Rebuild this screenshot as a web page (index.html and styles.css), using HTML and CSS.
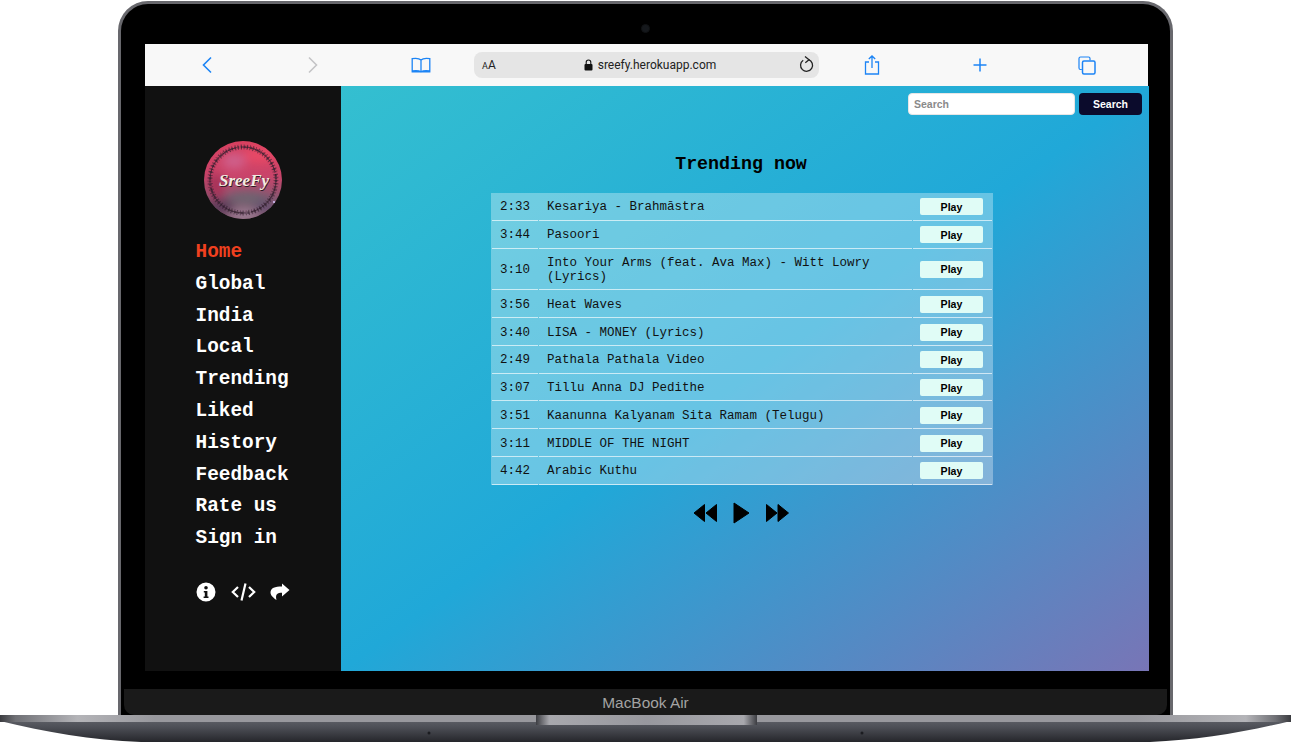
FILE: index.html
```html
<!DOCTYPE html>
<html lang="en">
<head>
<meta charset="utf-8">
<title>SreeFy</title>
<link rel="stylesheet" href="styles.css">
</head>
<body>
<div class="laptop">
  <div class="lid">
    <div class="camera-row"><span class="camera"></span></div>
    <div class="screen">
      <div class="safari">
        <svg class="s-icon back" width="12" height="18" viewBox="0 0 12 18"><path d="M10 1.500 2.500 9 10 16.500" fill="none" stroke="#1c84f5" stroke-width="1.600"/></svg>
        <svg class="s-icon fwd" width="12" height="18" viewBox="0 0 12 18"><path d="M2 1.500 9.500 9 2 16.500" fill="none" stroke="#c4c4c6" stroke-width="1.600"/></svg>
        <svg class="s-icon book" width="20" height="16" viewBox="0 0 20 16"><path d="M10 3C8.500 1.500 5 1 1.200 1.600V14C5 13.500 8.500 13.800 10 15 11.500 13.800 15 13.500 18.800 14V1.600C15 1 11.500 1.500 10 3ZM10 3V15M.6 14.800H19.400" fill="none" stroke="#1c84f5" stroke-width="1.300"/></svg>
        <div class="url">
          <span class="aa"><small>A</small>A</span>
          <span class="address">
            <svg width="9" height="12" viewBox="0 0 9 12"><rect x=".5" y="5" width="8" height="6.500" rx="1" fill="#111"/><path d="M2.200 5.500V3.300a2.300 2.300 0 0 1 4.600 0v2.200" fill="none" stroke="#111" stroke-width="1.100"/></svg>
            sreefy.herokuapp.com
          </span>
          <svg class="reload" width="15" height="18" viewBox="0 0 15 18"><path d="M9.500 3.600A6 6 0 1 1 4.200 4.300" fill="none" stroke="#222" stroke-width="1.300"/><path d="M6 .5 10 3.700 6.300 6.800" fill="none" stroke="#222" stroke-width="1.300"/></svg>
        </div>
        <svg class="s-icon share" width="16" height="20" viewBox="0 0 16 20"><path d="M5 7H1.500v12h13V7H11M8 13V1M4.800 4 8 1l3.200 3" fill="none" stroke="#1c84f5" stroke-width="1.300"/></svg>
        <svg class="s-icon plus" width="16" height="16" viewBox="0 0 16 16"><path d="M8 1.500v13M1.500 8h13" fill="none" stroke="#1c84f5" stroke-width="1.500"/></svg>
        <svg class="s-icon tabs" width="18" height="19" viewBox="0 0 18 19"><path d="M3.800 13.500H2.500a1.500 1.500 0 0 1-1.500-1.500V2.500A1.500 1.500 0 0 1 2.500 1h8A1.500 1.500 0 0 1 12 2.500v1.800" fill="none" stroke="#1c84f5" stroke-width="1.200"/><rect x="4.500" y="5" width="12.500" height="13" rx="1.500" fill="none" stroke="#1c84f5" stroke-width="1.500"/></svg>
      </div>
      <div class="app">
        <aside class="sidebar">
          <svg class="logo" width="78" height="78" viewBox="0 0 78 78">
            <defs>
              <linearGradient id="lg1" x1="0" y1="0" x2="0" y2="1">
                <stop offset="0" stop-color="#d8405f"/>
                <stop offset=".45" stop-color="#c9446a"/>
                <stop offset=".72" stop-color="#8d5570"/>
                <stop offset="1" stop-color="#8b5f78"/>
              </linearGradient>
              <filter id="blur" x="-30%" y="-30%" width="160%" height="160%"><feGaussianBlur stdDeviation="5"/></filter>
              <filter id="soft" x="-10%" y="-10%" width="120%" height="120%"><feGaussianBlur stdDeviation=".3"/></filter>
              <clipPath id="disc"><circle cx="39" cy="39" r="39"/></clipPath>
            </defs>
            <g clip-path="url(#disc)">
              <rect width="78" height="78" fill="url(#lg1)"/>
              <g filter="url(#blur)">
                <ellipse cx="56" cy="14" rx="16" ry="8" fill="#e84a66"/>
                <ellipse cx="30" cy="20" rx="12" ry="8" fill="#cf5f8a"/>
                <ellipse cx="12" cy="45" rx="8" ry="13" fill="#a83358"/>
                <ellipse cx="44" cy="58" rx="20" ry="7" fill="#6e6470"/>
                <ellipse cx="16" cy="66" rx="14" ry="8" fill="#5b3a58"/>
                <ellipse cx="62" cy="66" rx="12" ry="7" fill="#66506e"/>
                <ellipse cx="40" cy="74" rx="14" ry="5" fill="#9b8296"/>
              </g>
            </g>
            <g filter="url(#soft)" fill="none" stroke="#33202e">
              <circle cx="39" cy="39" r="33" stroke-width="5" stroke-opacity=".6" stroke-dasharray=".8 2.200 1.200 1.800"/>
              <circle cx="39" cy="39" r="33" stroke-width="2.500" stroke-opacity=".6" stroke-dasharray="2 1.500 1 2"/>
              <circle cx="39" cy="39" r="33" stroke-width=".8" stroke-dasharray="44 6 46 5 48 4 45 3"/>
            </g>
            <circle cx="70" cy="61" r="1" fill="#d9c8ff"/>
            <text class="logo-shadow" x="40.700" y="45.700" text-anchor="middle">SreeFy</text>
            <text class="logo-text" x="40" y="45" text-anchor="middle">SreeFy</text>
          </svg>
          <nav class="nav">
            <a class="active">Home</a>
            <a>Global</a>
            <a>India</a>
            <a>Local</a>
            <a>Trending</a>
            <a>Liked</a>
            <a>History</a>
            <a>Feedback</a>
            <a>Rate us</a>
            <a>Sign in</a>
          </nav>
          <div class="tools">
            <svg width="20" height="20" viewBox="0 0 20 20"><path fill-rule="evenodd" d="M10 .5a9.500 9.500 0 1 0 0 19 9.500 9.500 0 0 0 0-19ZM10 4a1.800 1.800 0 1 1 0 3.600A1.800 1.800 0 0 1 10 4ZM7.800 9h3.600v5.500h1.100V16H7.600v-1.500h1.200v-4h-1Z" fill="#fff"/></svg>
            <svg width="25" height="20" viewBox="0 0 25 20"><path d="M7 5 1.800 10 7 15M18 5l5.200 5L18 15M14.500 1.500 10.500 18.500" fill="none" stroke="#fff" stroke-width="2.200"/></svg>
            <svg width="20" height="18" viewBox="0 0 20 18"><path d="M12 .5 19.500 7 12 13.500V9.700C7.500 9.700 5 11 6.500 17 2 14 .5 11.500.5 9.500.5 5 5 3.500 12 3.500Z" fill="#fff"/></svg>
          </div>
        </aside>
        <main class="main">
          <form class="search">
            <input class="search-input" type="text" placeholder="Search">
            <button class="search-btn" type="button">Search</button>
          </form>
          <section class="content">
            <h1 class="title">Trending now</h1>
            <table class="songs">
              <tbody>
                <tr><td class="time">2:33</td><td class="name">Kesariya - Brahmāstra</td><td class="act"><button class="play" type="button">Play</button></td></tr>
                <tr><td class="time">3:44</td><td class="name">Pasoori</td><td class="act"><button class="play" type="button">Play</button></td></tr>
                <tr><td class="time">3:10</td><td class="name">Into Your Arms (feat. Ava Max) - Witt Lowry (Lyrics)</td><td class="act"><button class="play" type="button">Play</button></td></tr>
                <tr><td class="time">3:56</td><td class="name">Heat Waves</td><td class="act"><button class="play" type="button">Play</button></td></tr>
                <tr><td class="time">3:40</td><td class="name">LISA - MONEY (Lyrics)</td><td class="act"><button class="play" type="button">Play</button></td></tr>
                <tr><td class="time">2:49</td><td class="name">Pathala Pathala Video</td><td class="act"><button class="play" type="button">Play</button></td></tr>
                <tr><td class="time">3:07</td><td class="name">Tillu Anna DJ Pedithe</td><td class="act"><button class="play" type="button">Play</button></td></tr>
                <tr><td class="time">3:51</td><td class="name">Kaanunna Kalyanam Sita Ramam (Telugu)</td><td class="act"><button class="play" type="button">Play</button></td></tr>
                <tr><td class="time">3:11</td><td class="name">MIDDLE OF THE NIGHT</td><td class="act"><button class="play" type="button">Play</button></td></tr>
                <tr><td class="time">4:42</td><td class="name">Arabic Kuthu</td><td class="act"><button class="play" type="button">Play</button></td></tr>
              </tbody>
            </table>
            <div class="player">
              <svg width="24" height="20" viewBox="0 0 24 20"><path d="M11.500 1.500v17L1 10ZM23.500 1.500v17L13 10Z" fill="#000" stroke="#000" stroke-linejoin="round"/></svg>
              <svg width="17" height="22" viewBox="0 0 17 22"><path d="M1 1v20l15-10Z" fill="#000" stroke="#000" stroke-linejoin="round"/></svg>
              <svg width="24" height="20" viewBox="0 0 24 20"><path d="M.5 1.500v17L11 10ZM12 1.500v17L22.500 10Z" fill="#000" stroke="#000" stroke-linejoin="round"/></svg>
            </div>
          </section>
        </main>
      </div>
    </div>
    <div class="chin">MacBook Air</div>
  </div>
  <svg class="base" width="1291" height="27" viewBox="0 0 1291 27">
    <defs>
      <linearGradient id="body" x1="0" y1="0" x2="0" y2="1">
        <stop offset="0" stop-color="#686a71"/>
        <stop offset=".45" stop-color="#4d4f56"/>
        <stop offset="1" stop-color="#25262b"/>
      </linearGradient>
      <linearGradient id="band" x1="0" y1="0" x2="1" y2="0">
        <stop offset="0" stop-color="#3b3c40"/>
        <stop offset=".012" stop-color="#6f7075"/>
        <stop offset=".06" stop-color="#b4b4b8"/>
        <stop offset=".12" stop-color="#98989d"/>
        <stop offset=".88" stop-color="#98989d"/>
        <stop offset=".965" stop-color="#b4b4b8"/>
        <stop offset=".988" stop-color="#6f7075"/>
        <stop offset="1" stop-color="#3b3c40"/>
      </linearGradient>
      <linearGradient id="notch" x1="0" y1="0" x2="1" y2="0">
        <stop offset="0" stop-color="#3c3d42"/>
        <stop offset=".06" stop-color="#a8a8ad"/>
        <stop offset=".5" stop-color="#98989e"/>
        <stop offset=".94" stop-color="#a8a8ad"/>
        <stop offset="1" stop-color="#3c3d42"/>
      </linearGradient>
    </defs>
    <path d="M0 0H1291V6C1245 17 1200 25 1150 27H141C91 25 46 17 0 6Z" fill="url(#body)"/>
    <rect x="0" y="0" width="1291" height="7" fill="url(#band)"/>
    <rect x="536" y="0" width="221" height="10" fill="url(#notch)"/>
    <circle cx="429" cy="18" r="1.500" fill="#1b1c20"/>
    <circle cx="862" cy="18" r="1.500" fill="#1b1c20"/>
  </svg>
</div>
</body>
</html>
```
FILE: styles.css
```css
html, body {
  margin: 0;
  padding: 0;
  background: #fff;
}

.laptop {
  width: 1291px;
  height: 742px;
  overflow: hidden;
  display: flex;
  flex-direction: column;
  padding-top: 1px;
  box-sizing: border-box;
}

.lid {
  width: 1055px;
  height: 714px;
  flex: none;
  margin-left: 118px;
  box-sizing: border-box;
  background: #000;
  border: 3px solid #68686d;
  border-bottom: 0;
  border-radius: 30px 30px 0 0;
  display: flex;
  flex-direction: column;
}

.camera-row {
  height: 40px;
  flex: none;
  box-sizing: border-box;
  padding-top: 20px;
  display: flex;
  justify-content: center;
}

.camera {
  width: 7px;
  height: 7px;
  border-radius: 50%;
  background: #15181c;
  border: 1px solid #101214;
}

.screen {
  width: 1004px;
  height: 627px;
  margin-left: 24px;
  display: flex;
  flex-direction: column;
  flex: none;
}

.safari {
  height: 42px;
  flex: none;
  width: 1003px;
  background: #f8f8f8;
  display: flex;
  align-items: center;
}

.s-icon { flex: none; }
.back { margin-left: 56px; }
.fwd { margin-left: 94px; }
.book { margin-left: 92px; }
.share { margin-left: 45px; }
.plus { margin-left: 92px; }
.tabs { margin-left: 90px; }

.url {
  width: 345px;
  height: 26px;
  margin-left: 43px;
  flex: none;
  box-sizing: border-box;
  padding: 0 5px 0 8px;
  background: #e5e5e5;
  border-radius: 8px;
  display: grid;
  grid-template-columns: 1fr auto 1fr;
  align-items: center;
  font-family: "Roboto", "Liberation Sans", sans-serif;
  color: #222;
}

.aa {
  font-size: 12px;
}

.aa small { font-size: 9px; }

.address {
  font-size: 12px;
  display: flex;
  align-items: center;
  gap: 5px;
  margin-left: 4px;
}

.reload { justify-self: end; }

.app {
  flex: 1;
  display: flex;
  min-height: 0;
}

.sidebar {
  width: 196px;
  flex: none;
  box-sizing: border-box;
  background: #111;
  padding: 55px 0 0 50.500px;
  display: flex;
  flex-direction: column;
  align-items: flex-start;
}

.logo {
  margin-left: 8.500px;
  flex: none;
}

.logo-text,
.logo-shadow {
  font-family: "Liberation Serif", serif;
  font-style: italic;
  font-weight: 700;
  font-size: 17px;
}

.logo-text { fill: #f3ece2; }
.logo-shadow { fill: #2d1a24; }

.nav {
  margin-top: 18px;
  display: flex;
  flex-direction: column;
  font-family: "Liberation Mono", monospace;
  font-weight: 700;
  font-size: 19.4px;
  line-height: 31.8px;
  color: #fff;
}

.nav .active { color: #f0401f; }

.tools {
  margin: 27px 0 0 .5px;
  display: flex;
  align-items: center;
  gap: 14.500px;
}

.main {
  flex: 1;
  min-width: 0;
  background: linear-gradient(to bottom right, #34bfd0 0%, #20a8d8 50%, #7875b6 100%);
  box-sizing: border-box;
  padding-top: 7px;
  display: flex;
  flex-direction: column;
}

.search {
  margin: 0;
  display: flex;
  justify-content: flex-end;
  gap: 4px;
  padding-right: 7px;
}

.search-input {
  width: 167px;
  height: 22px;
  box-sizing: border-box;
  padding: 0 5px;
  border: 1px solid #e6e6e6;
  border-radius: 4px;
  background: #fff;
  outline: none;
  font-family: "Liberation Sans", sans-serif;
  font-weight: 700;
  font-size: 10.5px;
}

.search-input::placeholder { color: #8a8a8a; opacity: 1; }

.search-btn {
  width: 63px;
  height: 22px;
  padding: 0;
  border: 0;
  border-radius: 4px;
  background: #0b0b2c;
  color: #fff;
  font-family: "Liberation Sans", sans-serif;
  font-weight: 700;
  font-size: 10.5px;
}

.content {
  width: 502px;
  margin-left: 150px;
  display: flex;
  flex-direction: column;
  align-items: center;
}

.title {
  margin: 39px 2px 19px 0;
  height: 20px;
  font-family: "Liberation Mono", monospace;
  font-weight: 700;
  font-size: 18.3px;
  line-height: 20px;
  color: #000;
}

.songs {
  width: 502px;
  table-layout: fixed;
  border-collapse: separate;
  border-spacing: 1px 0;
  background: rgba(255, 255, 255, .32);
  font-family: "Liberation Mono", monospace;
  font-size: 12.5px;
  line-height: 14px;
  color: #111;
}

.songs td {
  padding: 7.400px 8px 5.400px;
  border-bottom: 1px solid rgba(255, 255, 255, .65);
  vertical-align: middle;
}

.songs .time { width: 30px; }

.songs .act {
  width: 63px;
  padding: 1px 9px 0 7px;
}

.play {
  display: block;
  width: 63px;
  height: 17px;
  padding: 0;
  border: 0;
  border-radius: 2px;
  background: #e0fcf6;
  color: #000;
  font-family: "Liberation Sans", sans-serif;
  font-weight: 700;
  font-size: 10.6px;
}

.player {
  margin: 17px 2px 0 0;
  display: flex;
  align-items: center;
  gap: 16px;
}

.chin {
  margin: 18px 3px 0;
  height: 26px;
  flex: none;
  background: #1a1a1a;
  border-radius: 0 0 10px 10px;
  color: #a3a3a3;
  font-family: "Liberation Sans", sans-serif;
  font-size: 15.4px;
  line-height: 28px;
  text-align: center;
}

.base {
  display: block;
  flex: none;
}
```
